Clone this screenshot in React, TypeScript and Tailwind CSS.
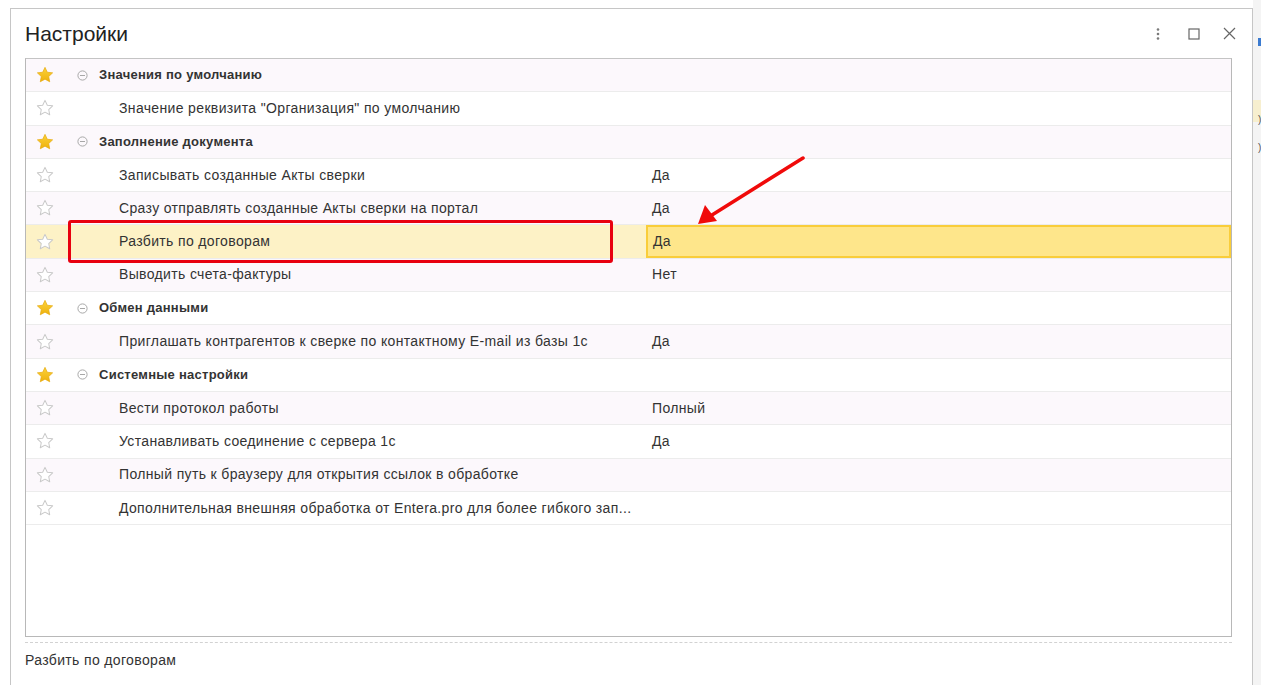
import React from "react";

type Row = { group?: boolean; label: string; value?: string; selected?: boolean };

const rows: Row[] = [
  { group: true, label: "Значения по умолчанию" },
  { label: 'Значение реквизита "Организация" по умолчанию' },
  { group: true, label: "Заполнение документа" },
  { label: "Записывать созданные Акты сверки", value: "Да" },
  { label: "Сразу отправлять созданные Акты сверки на портал", value: "Да" },
  { label: "Разбить по договорам", value: "Да", selected: true },
  { label: "Выводить счета-фактуры", value: "Нет" },
  { group: true, label: "Обмен данными" },
  { label: "Приглашать контрагентов к сверке по контактному E-mail из базы 1с", value: "Да" },
  { group: true, label: "Системные настройки" },
  { label: "Вести протокол работы", value: "Полный" },
  { label: "Устанавливать соединение с сервера 1с", value: "Да" },
  { label: "Полный путь к браузеру для открытия ссылок в обработке" },
  { label: "Дополнительная внешняя обработка от Entera.pro для более гибкого зап..." },
];

function Star({ filled }: { filled: boolean }) {
  const d =
    "M8 1.2 L10.05 5.55 L14.8 6.1 L11.3 9.35 L12.2 14.05 L8 11.7 L3.8 14.05 L4.7 9.35 L1.2 6.1 L5.95 5.55 Z";
  return (
    <svg width="18" height="18" viewBox="0 0 16 16">
      {filled ? (
        <>
          <defs>
            <linearGradient id="sg" x1="0" y1="0" x2="0" y2="1">
              <stop offset="0" stopColor="#fbd23a" />
              <stop offset="1" stopColor="#eeb10c" />
            </linearGradient>
          </defs>
          <path d={d} fill="url(#sg)" stroke="#e6a90a" strokeWidth="0.6" strokeLinejoin="round" />
        </>
      ) : (
        <path d={d} fill="#ffffff" stroke="#c9c9c9" strokeWidth="0.9" strokeLinejoin="round" />
      )}
    </svg>
  );
}

function CircleMinus() {
  return (
    <svg width="11" height="11" viewBox="0 0 11 11">
      <circle cx="5.5" cy="5.5" r="4.6" fill="none" stroke="#a8a8a8" strokeWidth="1" />
      <line x1="3" y1="5.5" x2="8" y2="5.5" stroke="#a8a8a8" strokeWidth="1" />
    </svg>
  );
}

export default function App() {
  const font = { fontFamily: '"Liberation Sans", Arial, sans-serif' };
  return (
    <div className="w-[1261px] h-[685px] overflow-hidden bg-white relative" style={font}>
      <div className="flex h-full">
        <div className="w-[10px] shrink-0 bg-white" />
        <div className="mt-[8px] w-[1243px] h-[700px] border border-[#c6c6c6] bg-white flex flex-col shrink-0">
          {/* header */}
          <div className="h-[49px] flex items-center pl-[14px] pr-[16px]">
            <div className="text-[21px] text-[#222] flex-1">Настройки</div>
            <div className="flex items-center text-[#555]">
              <svg width="4" height="14" viewBox="0 0 4 14">
                <circle cx="2" cy="2.5" r="1.3" fill="#7a7a7a" />
                <circle cx="2" cy="7" r="1.3" fill="#7a7a7a" />
                <circle cx="2" cy="11.5" r="1.3" fill="#7a7a7a" />
              </svg>
              <svg className="ml-[28px]" width="12" height="12" viewBox="0 0 12 12">
                <rect x="1" y="1" width="10" height="10" fill="none" stroke="#666" strokeWidth="1.2" />
              </svg>
              <svg className="ml-[23px]" width="13" height="13" viewBox="0 0 13 13">
                <path d="M1 1 L12 12 M12 1 L1 12" stroke="#666" strokeWidth="1.2" />
              </svg>
            </div>
          </div>
          {/* table */}
          <div className="ml-[14px] w-[1207px] h-[579px] border border-[#b8b8b8] border-t-[#c4c4c4] bg-white relative">
            {rows.map((r, i) => {
              const bg = i % 2 === 0 ? "bg-[#fcf8fc]" : "bg-white";
              if (r.selected) {
                return (
                  <div key={i} className="h-[33.3px] flex border-b border-[#ececec] text-[14px] tracking-[0.35px] text-[#333]">
                    <div className="w-[620px] bg-[#fdf2c6] flex items-center">
                      <div className="w-[37px] flex justify-center">
                        <Star filled={false} />
                      </div>
                      <div className="pl-[56px]">{r.label}</div>
                    </div>
                    <div className="flex-1 bg-[#fee68b] border-2 border-[#f9cd3a] flex items-center pl-[5px]">
                      {r.value}
                    </div>
                  </div>
                );
              }
              return (
                <div key={i} className={`h-[33.3px] flex items-center border-b border-[#ececec] ${bg}`}>
                  <div className="w-[37px] flex justify-center">
                    <Star filled={!!r.group} />
                  </div>
                  {r.group ? (
                    <div className="flex items-center">
                      <div className="ml-[14px] w-[20px] flex">
                        <CircleMinus />
                      </div>
                      <div className="ml-[2px] text-[13px] tracking-[0.25px] font-bold text-[#333]">{r.label}</div>
                    </div>
                  ) : (
                    <>
                      <div className="w-[583px] pl-[56px] text-[14px] tracking-[0.35px] text-[#333] whitespace-nowrap">{r.label}</div>
                      <div className="pl-[6px] text-[14px] tracking-[0.35px] text-[#333]">{r.value}</div>
                    </>
                  )}
                </div>
              );
            })}
            {/* red highlight box */}
            <div className="absolute left-[42px] top-[161px] w-[545px] h-[43px] border-[3px] border-[#e8000f] rounded-[3px]" />
          </div>
          <div className="ml-[14px] w-[1207px] mt-[5px] border-t border-dashed border-[#d2d2d2]" />
          <div className="ml-[14px] mt-[7px] text-[14px] tracking-[0.35px] text-[#333]">Разбить по договорам</div>
        </div>
        <div className="flex-1 bg-[#f4f4f4] relative">
          <div className="absolute left-[5px] top-[38px] w-[3px] h-[8px] bg-[#3b7bd0]" />
          <div className="absolute left-[0px] top-[100px] w-[8px] h-[22px] bg-[#f7efcf]" />
          <div className="absolute left-[5px] top-[112px] text-[10px] text-[#555]">)</div>
          <div className="absolute left-[5px] top-[140px] text-[10px] text-[#555]">)</div>
        </div>
      </div>
      {/* red arrow */}
      <svg className="absolute left-0 top-0 pointer-events-none" width="1261" height="685">
        <line x1="803" y1="158" x2="712" y2="215" stroke="#f00a0a" strokeWidth="3.5" strokeLinecap="round" />
        <polygon points="698,224 705,205 717,221" fill="#f00a0a" />
      </svg>
    </div>
  );
}
